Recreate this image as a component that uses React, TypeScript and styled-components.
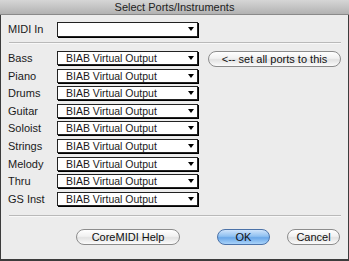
import React from "react";
import styled, { createGlobalStyle } from "styled-components";

const Global = createGlobalStyle`
  html, body { margin: 0; padding: 0; background: #ececec; }
  * { box-sizing: border-box; }
`;

const Window = styled.div`
  width: 349px;
  height: 261px;
  background: #ececec;
  border: 1px solid #3c3c3c;
  border-top: none;
  border-bottom-width: 2px;
  display: flex;
  flex-direction: column;
  font-family: "Liberation Sans", Arial, sans-serif;
  font-size: 11px;
  color: #111;
`;

const TitleBar = styled.div`
  height: 15px;
  margin: 0 -1px;
  background: linear-gradient(#d6d6d6, #b2b2b2);
  border-bottom: 1px solid #8a8a8a;
  display: flex;
  align-items: center;
  justify-content: center;
  font-size: 11px;
  color: #222;
`;

const Body = styled.div`
  padding: 6px 6px 0 7px;
  display: flex;
  flex-direction: column;
`;

const TopRow = styled.div`
  display: flex;
  align-items: center;
  height: 16px;
`;

const Label = styled.div`
  width: 49px;
  font-size: 11px;
  color: #1a1a1a;
  white-space: nowrap;
`;

const Select = styled.div<{ $tall?: boolean }>`
  position: relative;
  width: 141px;
  height: ${(p) => (p.$tall ? 15 : 14)}px;
  background: #fff;
  border: 1px solid #222;
  box-shadow: 1px 1px 0 #000;
  padding-left: 8px;
  display: flex;
  align-items: center;
  font-size: 10.5px;
  color: #1a1a1a;
  white-space: nowrap;
`;

const Arrow = styled.span`
  position: absolute;
  right: 3px;
  top: 50%;
  margin-top: -2px;
  width: 0;
  height: 0;
  border-left: 3.5px solid transparent;
  border-right: 3.5px solid transparent;
  border-top: 4px solid #000;
`;

const Separator = styled.div<{ $top: number }>`
  height: 2px;
  margin: ${(p) => p.$top}px 1px 0 1px;
  border-top: 1px solid #b9b9b9;
  border-bottom: 1px solid #f8f8f8;
`;

const Main = styled.div`
  display: flex;
  gap: 10px;
  margin-top: 7px;
`;

const Rows = styled.div`
  display: grid;
  grid-template-columns: 49px 141px;
  grid-auto-rows: 14px;
  row-gap: 3.6px;
  align-items: center;
`;

const PillButton = styled.button<{ $primary?: boolean; $w: number }>`
  width: ${(p) => p.$w}px;
  height: 16px;
  border-radius: 8px;
  border: 1px solid ${(p) => (p.$primary ? "#4b72a8" : "#8c8c8c")};
  background: ${(p) =>
    p.$primary
      ? "linear-gradient(#cfe4fb 0%, #8fc0f1 45%, #6aa7e8 55%, #a9d3fa 100%)"
      : "linear-gradient(#ffffff 0%, #f1f1f1 45%, #e2e2e2 55%, #fbfbfb 100%)"};
  font-family: "Liberation Sans", Arial, sans-serif;
  font-size: 11px;
  color: #111;
  padding: 0;
  display: flex;
  align-items: center;
  justify-content: center;
`;

const Footer = styled.div`
  display: flex;
  justify-content: flex-end;
  align-items: center;
  margin-top: 12px;
  padding-right: 2px;
`;

const Spacer = styled.div<{ $w: number }>`
  width: ${(p) => p.$w}px;
`;

const ports = ["Bass", "Piano", "Drums", "Guitar", "Soloist", "Strings", "Melody", "Thru", "GS Inst"];

export default function App() {
  return (
    <>
      <Global />
      <Window>
        <TitleBar>Select Ports/Instruments</TitleBar>
        <Body>
          <TopRow>
            <Label>MIDI In</Label>
            <Select $tall>
              <Arrow />
            </Select>
          </TopRow>
          <Separator $top={5} />
          <Main>
            <Rows>
              {ports.map((p) => (
                <React.Fragment key={p}>
                  <Label>{p}</Label>
                  <Select>
                    BIAB Virtual Output
                    <Arrow />
                  </Select>
                </React.Fragment>
              ))}
            </Rows>
            <div>
              <PillButton $w={133}>&lt;-- set all ports to this</PillButton>
            </div>
          </Main>
          <Separator $top={9} />
          <Footer>
            <PillButton $w={104}>CoreMIDI Help</PillButton>
            <Spacer $w={37} />
            <PillButton $w={53} $primary>OK</PillButton>
            <Spacer $w={17} />
            <PillButton $w={53}>Cancel</PillButton>
          </Footer>
        </Body>
      </Window>
    </>
  );
}
